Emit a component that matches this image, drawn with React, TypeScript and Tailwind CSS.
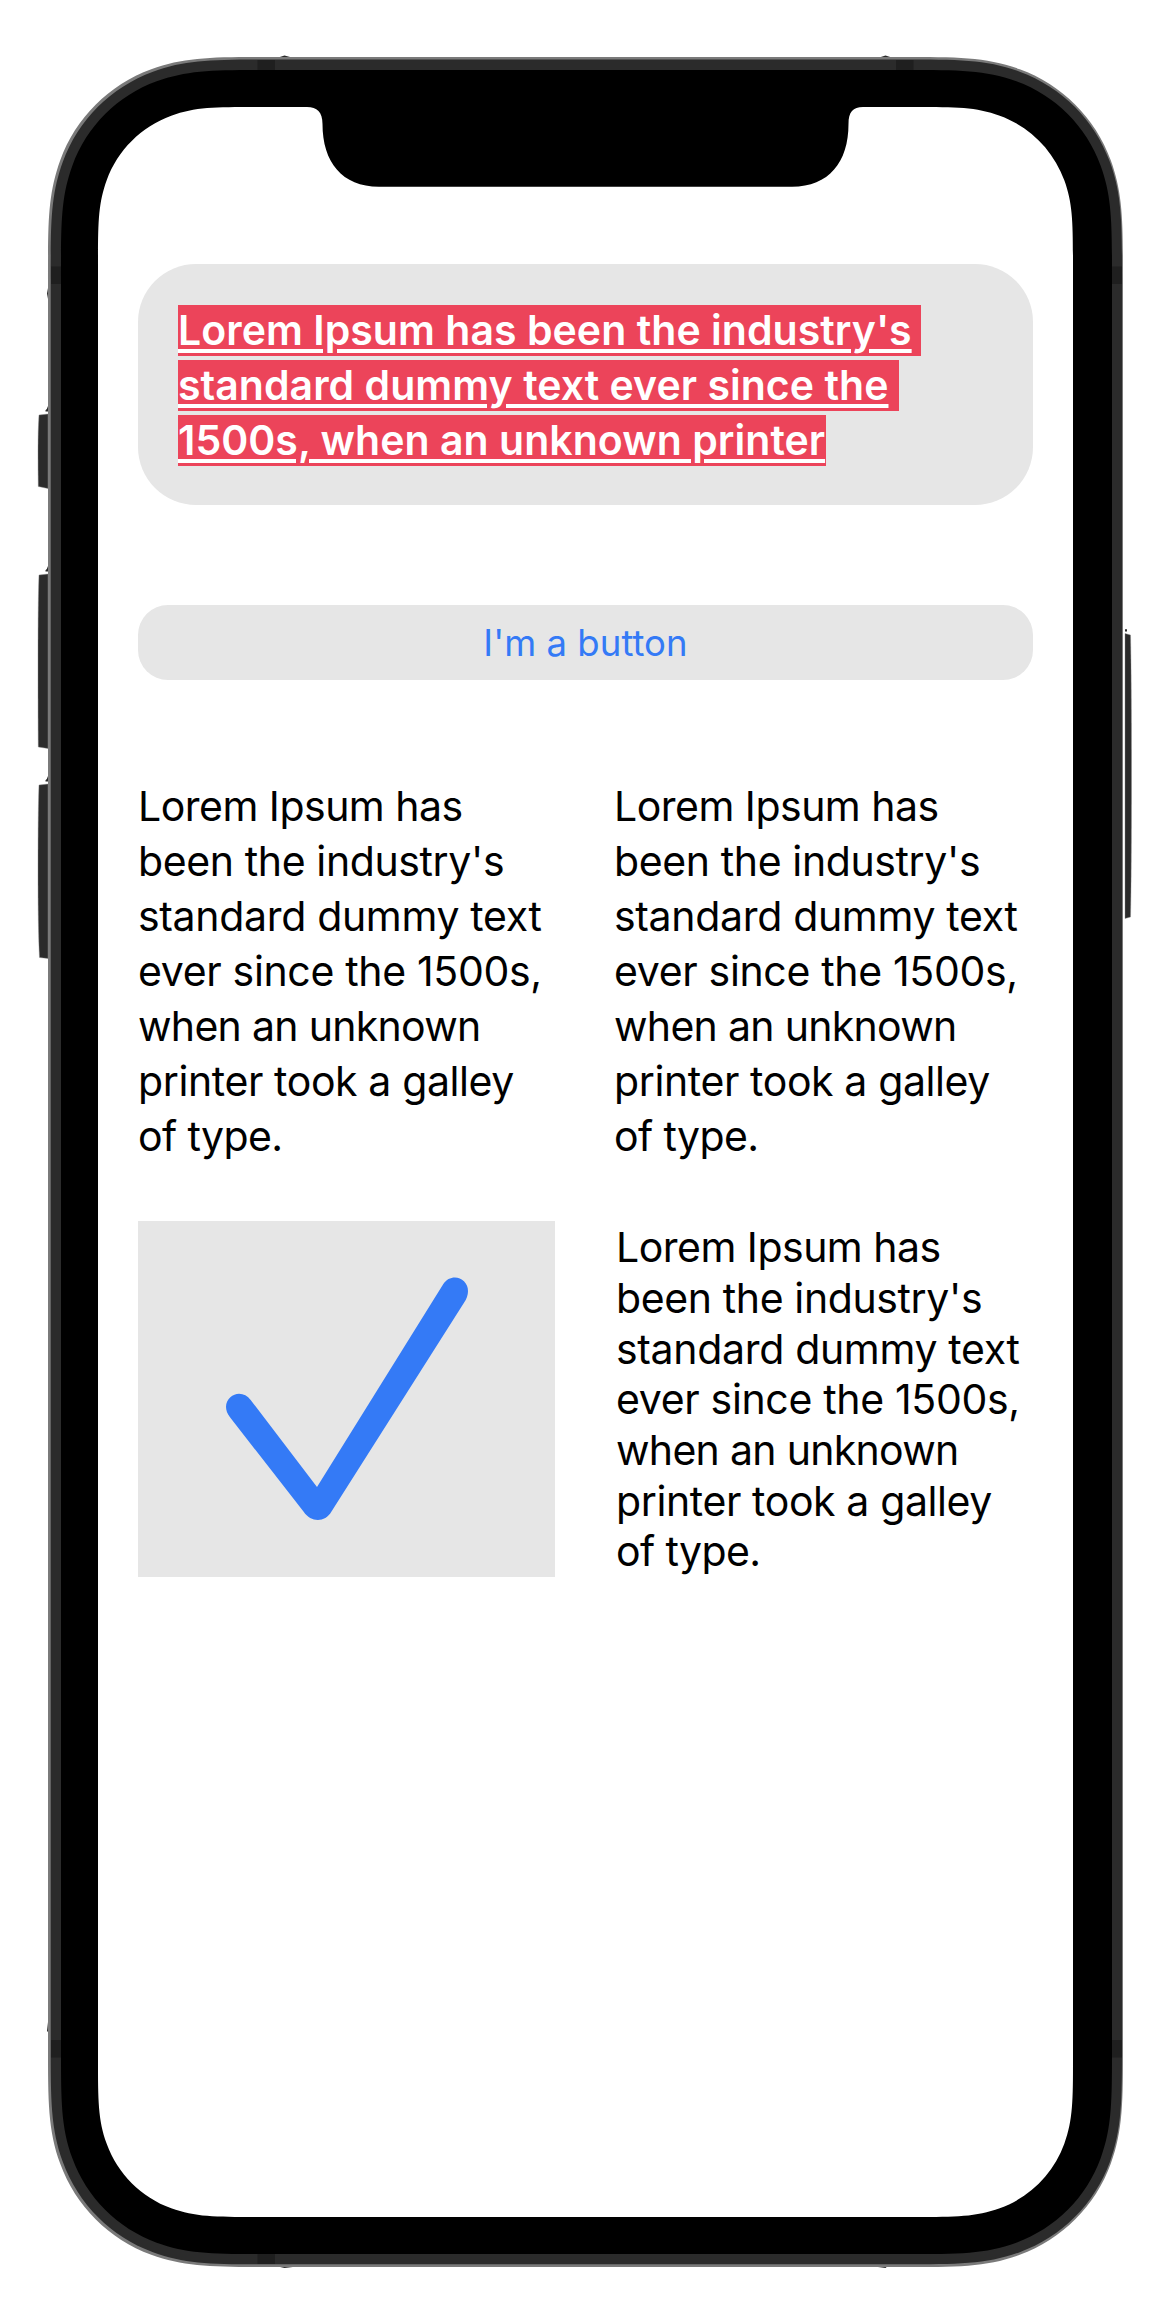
import React from "react";

/** Closed path of a rectangle with continuous (smoothed) corners. */
function smoothRect(l: number, t: number, r: number, b: number, rad: number) {
  const [s, p, q, m, n, u, v] = [1.36, 1.01, 0.8373, 0.631494, 0.074911, 0.372824, 0.16906].map((k) => k * rad);
  return [
    `M${l + s} ${t}H${r - s}`,
    `C${r - p} ${t} ${r - q} ${t} ${r - m} ${t + n}C${r - u} ${t + v} ${r - v} ${t + u} ${r - n} ${t + m}C${r} ${t + q} ${r} ${t + p} ${r} ${t + s}`,
    `V${b - s}`,
    `C${r} ${b - p} ${r} ${b - q} ${r - n} ${b - m}C${r - v} ${b - u} ${r - u} ${b - v} ${r - m} ${b - n}C${r - q} ${b} ${r - p} ${b} ${r - s} ${b}`,
    `H${l + s}`,
    `C${l + p} ${b} ${l + q} ${b} ${l + m} ${b - n}C${l + u} ${b - v} ${l + v} ${b - u} ${l + n} ${b - m}C${l} ${b - q} ${l} ${b - p} ${l} ${b - s}`,
    `V${t + s}`,
    `C${l} ${t + p} ${l} ${t + q} ${l + n} ${t + m}C${l + v} ${t + u} ${l + u} ${t + v} ${l + m} ${t + n}C${l + q} ${t} ${l + p} ${t} ${l + s} ${t}Z`,
  ].join("");
}

function PhoneFrame() {
  return (
    <svg className="absolute inset-0 h-full w-full" viewBox="0 0 1174 2324" aria-hidden="true">
      <g fill="#2b2b2b" stroke="#888" strokeWidth="0.4">
        <path d="M48 414L39 415Q38 430 38 450T38.300 486.500L48 488.500Z" />
        <path d="M48 574L39 575Q38 600 38 660T38.300 747L48 748.500Z" />
        <path d="M48 784L39 785Q38 810 38 870T39.500 957.500L48 958.500Z" />
        <path d="M1125 633.500L1130.500 635Q1131.500 680 1131.500 776T1130.500 917L1125 918.500Z" />
      </g>
      <g fill="#2b2b2b">
        <path d="M48 406V411.500H45.500V410.300Q47 409.500 48 406ZM48 566V571.500H45.500V570.300Q47 569.500 48 566ZM48 776V781.500H45.500V780.300Q47 779.500 48 776ZM1125 629.300h2v2.200h-2z" />
        <path d="M48 288L47 293.500L48 299ZM48 2022L47 2031L48 2032Z" />
        <path d="M279 57.300L284.500 55.500L291 57.300ZM880 57.300L885.500 55.500L891 57.300ZM279 2266.700L284.500 2268L295 2266.700ZM876 2266.700L885.500 2268L887 2266.700Z" />
      </g>
      <path d={smoothRect(48, 57, 1123, 2267, 163.5)} fill="#7a7a7a" />
      <path d={smoothRect(50.7, 59.5, 1122, 2264.3, 162)} fill="#2b2b2b" />
      <g fill="#1f1f1f">
        <path d="M257.500 60h17.500v10h-17.500zM896 60h17.500v10h-17.500zM257.500 2254h17.500v10h-17.500z" />
        <path d="M51 266.500h10v17.500h-10zM1112 266.500h10v17.500h-10zM51 2040h10v17.500h-10zM1112 2040h10v17.500h-10z" />
      </g>
      <path d={smoothRect(61, 70, 1112, 2254, 151.5)} fill="#000" />
      <path d={smoothRect(98, 107, 1073, 2217, 116)} fill="#fff" />
      <path
        d="M305 106V107H307C317 107 322.500 112 322.500 124C322.500 162 342 186.700 379 186.700H792C829 186.700 848.500 162 848.500 124C848.500 112 853 107 863 107V106Z"
        fill="#000"
      />
    </svg>
  );
}

const headline = [
  { text: "Lorem Ipsum has been the industry's", width: "w-[743px]" },
  { text: "standard dummy text ever since the", width: "w-[721px]" },
  { text: "1500s, when an unknown printer", width: "w-[648px]" },
];

const lines = [
  { text: "Lorem Ipsum has", tracking: "tracking-[-0.5px]" },
  { text: "been the industry's", tracking: "tracking-[-0.38px]" },
  { text: "standard dummy text", tracking: "tracking-[-0.32px]" },
  { text: "ever since the 1500s,", tracking: "tracking-[-0.33px]" },
  { text: "when an unknown", tracking: "tracking-[-0.7px]" },
  { text: "printer took a galley", tracking: "tracking-[-0.39px]" },
  { text: "of type.", tracking: "tracking-[-0.6px]" },
];

function Paragraph({ className }: { className: string }) {
  return (
    <p className={className}>
      {lines.map((line) => (
        <span key={line.text} className={`block whitespace-nowrap ${line.tracking}`}>
          {line.text}
        </span>
      ))}
    </p>
  );
}

export default function App() {
  return (
    <div className="relative h-[2324px] w-[1174px] overflow-hidden bg-white font-['Inter',sans-serif] text-black">
      <PhoneFrame />
      <main className="relative flex flex-col pl-[138px] pr-[141px] pt-[264px]">
        <section className="flex h-[241px] flex-col gap-1 rounded-[58px] bg-[#e6e6e6] pl-10 pt-[40.5px]">
          {headline.map((l) => (
            <div
              key={l.text}
              className={`h-[51px] bg-[#ec445a] text-[41px] font-semibold leading-[51px] tracking-[0.04px] whitespace-nowrap text-white ${l.width}`}
            >
              <span className="underline decoration-4 underline-offset-[4px]">{l.text}</span>
            </div>
          ))}
        </section>
        <button className="mt-[100px] h-[75px] rounded-[30px] bg-[#e6e6e6] pt-[2px] text-[36.5px] leading-[73px] tracking-[0.05px] text-[#347af6]">
          I'm a button
        </button>
        <div className="mt-[99px] grid grid-cols-[476px_1fr]">
          <Paragraph className="text-[41px] leading-[55px]" />
          <Paragraph className="text-[41px] leading-[55px]" />
        </div>
        <div className="mt-[57px] grid grid-cols-[478px_1fr]">
          <div className="h-[356px] w-[417px] bg-[#e6e6e6]">
            <svg className="block h-full w-full" viewBox="24 33 1251 1068" role="img" aria-label="Checkmark">
              <path
                d="M561 831L940 222C955 198 986 197 1002 214C1018 230 1018 255 1002 278L604 905C585 938 543 938 521 905L300 622C282 598 286 575 301 562C318 546 346 548 362 570Z"
                fill="#347af6"
              />
            </svg>
          </div>
          <Paragraph className="pt-[1.4px] text-[41px] leading-[50.65px]" />
        </div>
      </main>
    </div>
  );
}
